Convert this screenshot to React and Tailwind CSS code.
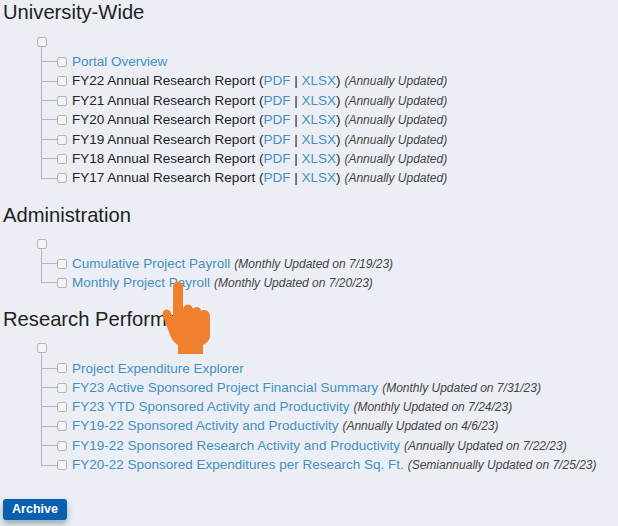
const Box = ({ className = "" }) => (
  <span className={`block w-[10px] h-[10px] shrink-0 rounded-[2px] border border-[#b5b5b5] bg-[#f4f4f4] ${className}`} />
);

const A = ({ children }) => <a className="text-[#4590c2]">{children}</a>;

const Note = ({ children }) => (
  <em className="ml-[4px] text-[12px] text-[#444]">{children}</em>
);

const Row = ({ last, children }) => (
  <li className="flex h-[19.4px] items-stretch">
    <div className="flex w-[16px] shrink-0 flex-col">
      <div className="h-[10px] border-b border-l border-[#b5b5b5]" />
      <div className={`flex-1 ${last ? "" : "border-l border-[#b5b5b5]"}`} />
    </div>
    <div className="flex items-center whitespace-nowrap">
      <Box className="mr-[5px]" />
      <span>{children}</span>
    </div>
  </li>
);

const Report = ({ year, last }) => (
  <Row last={last}>
    FY{year} Annual Research Report (<A>PDF</A> | <A>XLSX</A>)
    <Note>(Annually Updated)</Note>
  </Row>
);

const Section = ({ title, className = "", treeClass = "mt-[13px]", children }) => (
  <section className={className}>
    <h3 className="h-[24px] text-[20.2px] leading-[24px] text-[#222]">{title}</h3>
    <div className={`ml-[34px] ${treeClass}`}>
      <Box />
      <div className="ml-[4px] h-[5.3px] border-l border-[#b5b5b5]" />
      <ul className="ml-[4px] text-[13.5px] leading-[19px] text-[#222]">{children}</ul>
    </div>
  </section>
);

export default function App() {
  return (
    <div
      className="relative h-[526px] w-[618px] overflow-hidden bg-[#ebeff5] pl-[3px]"
      style={{ fontFamily: '"Liberation Sans", Arial, sans-serif' }}
    >
      <Section title="University-Wide">
        <Row><A>Portal Overview</A></Row>
        <Report year="22" />
        <Report year="21" />
        <Report year="20" />
        <Report year="19" />
        <Report year="18" />
        <Report year="17" last />
      </Section>

      <Section title="Administration" className="mt-[14.6px]" treeClass="mt-[12px]">
        <Row><A>Cumulative Project Payroll</A><Note>(Monthly Updated on 7/19/23)</Note></Row>
        <Row last><A>Monthly Project Payroll</A><Note>(Monthly Updated on 7/20/23)</Note></Row>
      </Section>

      <Section title="Research Performance" className="mt-[14.6px]" treeClass="mt-[12px]">
        <Row><A>Project Expenditure Explorer</A></Row>
        <Row><A>FY23 Active Sponsored Project Financial Summary</A><Note>(Monthly Updated on 7/31/23)</Note></Row>
        <Row><A>FY23 YTD Sponsored Activity and Productivity</A><Note>(Monthly Updated on 7/24/23)</Note></Row>
        <Row><A>FY19-22 Sponsored Activity and Productivity</A><Note>(Annually Updated on 4/6/23)</Note></Row>
        <Row><A>FY19-22 Sponsored Research Activity and Productivity</A><Note>(Annually Updated on 7/22/23)</Note></Row>
        <Row last><A>FY20-22 Sponsored Expenditures per Research Sq. Ft.</A><Note>(Semiannually Updated on 7/25/23)</Note></Row>
      </Section>

      <button className="mt-[23.6px] flex h-[21px] w-[64px] items-center justify-center rounded-[3px] bg-[#0a5fb0] text-[12.5px] font-bold text-white shadow-[0_4px_6px_rgba(60,90,100,0.45)]">
        Archive
      </button>

      <svg className="absolute left-[161px] top-[280px]" width="50" height="76" viewBox="0 0 50 76">
        <path
          fill="#f07f2e"
          d="M12 7 C12 0 22 0 22 7 L22 29 C23 23 31 23 32 29 C33 26 40 26 40 31 C42 29 49 30 49 36 L49 56 C49 60 46 63 42 65 L42 74 L17 74 L17 65 C12 62 10 58 8 52 L2 36 C0 29 8 27 10 33 L12 37 Z"
        />
      </svg>
    </div>
  );
}
